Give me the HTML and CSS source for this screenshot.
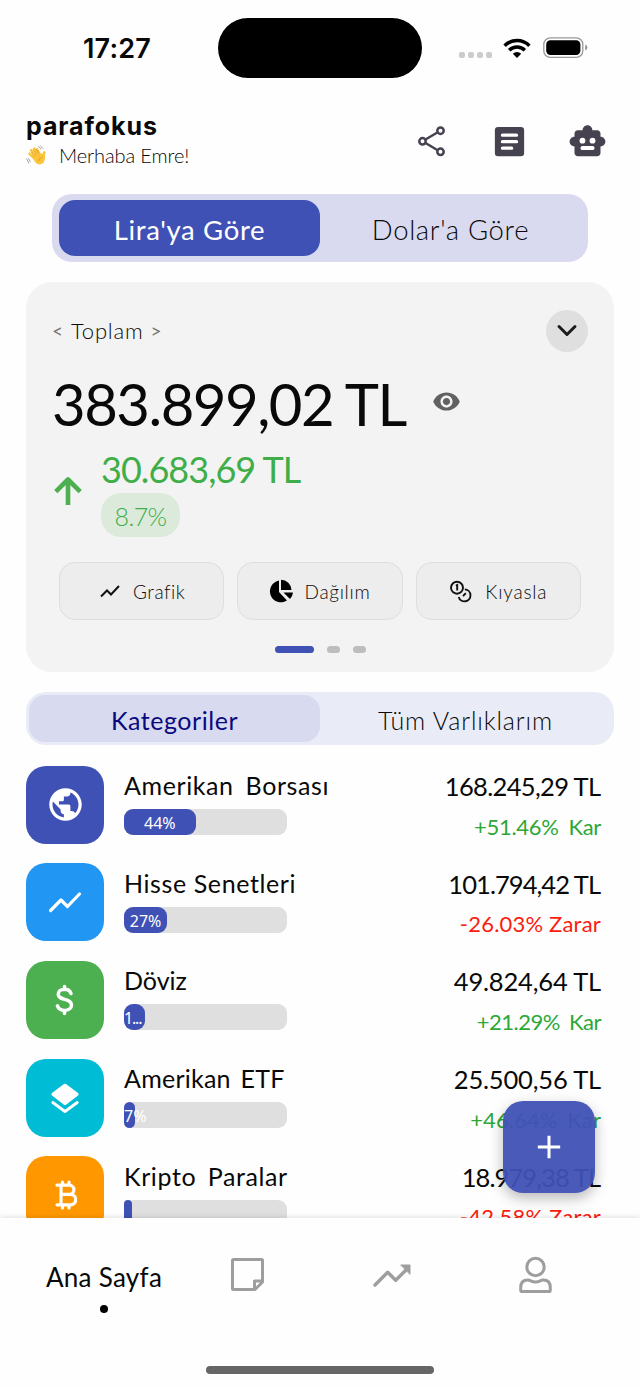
FILE: index.html
```html
<!DOCTYPE html>
<html lang="tr">
<head>
<meta charset="utf-8">
<title>parafokus</title>
<link rel="stylesheet" href="styles.css">
</head>
<body>
<div class="app">
  <div class="status">
    <span class="clock">17:27</span>
    <span class="island"></span>
    <span class="signal"><i></i><i></i><i></i><i></i></span>
    <svg class="wifi" width="28" height="21" viewBox="0 0 28 21" fill="none" stroke="#000" stroke-width="3.500"><path d="M1.600 7.700a17.600 17.600 0 0 1 24.800 0M6.200 12.200a11 11 0 0 1 15.600 0"/><path d="M9.800 15.800a6 6 0 0 1 8.400 0L14 20z" fill="#000" stroke="none"/></svg>
    <svg class="battery" width="45" height="22" viewBox="0 0 45 22"><rect x=".8" y=".8" width="39" height="19.600" rx="6.500" fill="none" stroke="#999" stroke-width="1.300"/><rect x="3.200" y="3.200" width="34.200" height="14.800" rx="4.200"/><path d="M42.300 7.500q2 1 2 3t-2 3z" fill="#888"/></svg>
  </div>

  <header class="header">
    <div class="brand">
      <h1>parafokus</h1>
      <p><svg width="21" height="21" viewBox="0 0 21 21" fill="none" stroke-linecap="round"><path d="M6 10.500 9 17q3 4 7.500 1.500 3-2 2.500-9L13 8z" fill="#fbc53a"/><path d="M9.500 14.500 3.600 8.600M10 11.500 5.200 5.200M12 10 8.200 3.600M14 10l-2.800-5.500M16.500 14.500l1.800-7" stroke="#fbc53a" stroke-width="2.700"/><path d="m8.500 11-3-3.700M10.300 9 7.300 5M12.500 8 10.300 4.500M12.500 16q.6-3.400 3.700-4" stroke="#dc8b24" stroke-width=".7"/><path d="M12.500 1.500l2.500 2.500M14.500.800l2.500 2.700M2.500 13.500l1.800 3.200M.8 14l1.900 4" stroke="#999" stroke-width=".9"/></svg><span>Merhaba Emre!</span></p>
    </div>
    <nav class="actions">
      <svg width="39" height="39" viewBox="0 0 39 39" fill="none" stroke="#47424f" stroke-width="2.500"><path d="M13.500 17.500 25.300 10.500M13.500 21 25.300 28"/><circle cx="10.500" cy="19.300" r="3.200"/><circle cx="28.500" cy="8.700" r="3.200"/><circle cx="28.500" cy="29.800" r="3.200"/></svg>
      <svg width="39" height="39" viewBox="0 0 24 24"><rect x="3" y="3" width="18" height="18" rx="2" fill="#47424f"/><path d="M7.700 8.100h8.600M7.700 12.100h8.600M7.700 16.100h5.600" stroke="#fff" stroke-width="2.100" stroke-linecap="round"/></svg>
      <svg width="39" height="39" viewBox="0 0 24 24" fill="#47424f"><path d="M20 9V7c0-1.100-.9-2-2-2h-3c0-1.660-1.340-3-3-3S9 3.340 9 5H6c-1.100 0-2 .9-2 2v2c-1.660 0-3 1.340-3 3s1.340 3 3 3v4c0 1.100.9 2 2 2h12c1.100 0 2-.9 2-2v-4c1.660 0 3-1.340 3-3s-1.340-3-3-3z"/><g fill="#fff"><circle cx="8.900" cy="11.500" r="1.800"/><circle cx="15.100" cy="11.500" r="1.800"/><rect x="7.700" y="14.800" width="8.600" height="2.500" rx="1.200"/></g></svg>
    </nav>
  </header>

  <div class="currency">
    <button class="on"><span>Lira'ya Göre</span></button>
    <button><span>Dolar'a Göre</span></button>
  </div>

  <section class="card">
    <div class="card-top">
      <div class="picker"><i>&lt;</i><span>Toplam</span><i>&gt;</i></div>
      <button class="expand"><svg width="22" height="16" viewBox="0 0 22 16" fill="none" stroke="#1b1b1b" stroke-width="3" stroke-linecap="round" stroke-linejoin="round"><path d="m3 3.500 8 8 8-8"/></svg></button>
    </div>
    <div class="total">
      <strong>383.899,02 TL</strong>
      <svg width="29" height="29" viewBox="0 0 24 24" fill="#616161"><path d="M12 4.500C7 4.500 2.730 7.610 1 12c1.730 4.390 6 7.500 11 7.500s9.270-3.110 11-7.500c-1.730-4.390-6-7.500-11-7.500zM12 17c-2.760 0-5-2.240-5-5s2.240-5 5-5 5 2.240 5 5-2.240 5-5 5zm0-8c-1.660 0-3 1.340-3 3s1.340 3 3 3 3-1.340 3-3-1.340-3-3-3z"/></svg>
    </div>
    <div class="gain">
      <svg width="30" height="30" viewBox="0 0 30 30" fill="none" stroke="#4caf50" stroke-width="4.600"><path d="M15 29V4M2.800 15.700 15 3.500l12.200 12.200" stroke-linejoin="round"/></svg>
      <div>
        <span class="gain-value">30.683,69 TL</span>
        <span class="pill">8.7%</span>
      </div>
    </div>
    <div class="tools">
      <button class="tool-chart"><svg width="20" height="14" viewBox="0 0 20 14" fill="none" stroke="#111" stroke-width="2"><path d="m1 12.500 6-6 4 4L19 2"/></svg><span>Grafik</span></button>
      <button class="tool-pie"><svg width="25" height="25" viewBox="0 0 25 25"><path d="M11 1.500V13l8 8.500A11 11 0 1 1 11 1.500zM13 0.800A10.500 10.500 0 0 1 23.500 11H13zM15.500 13.500H25q-.5 4-3 6.500z"/></svg><span>Dağılım</span></button>
      <button class="tool-compare"><svg width="23" height="23" viewBox="0 0 23 23" fill="none" stroke="#111" stroke-width="1.900"><circle cx="8" cy="7.700" r="6"/><path d="M6.900 5.600 8.200 5v5.600M15.800 9.400A6 6 0 1 1 9.700 17M14 16.200l2.800-3"/></svg><span>Kıyasla</span></button>
    </div>
    <div class="dots"><i class="on"></i><i></i><i></i></div>
  </section>

  <div class="tabs">
    <button class="on"><span>Kategoriler</span></button>
    <button class="wide"><span>Tüm Varlıklarım</span></button>
  </div>

  <main class="list">
    <article class="row">
      <div class="tile indigo"><svg width="39" height="39" viewBox="0 0 24 24" fill="#fff"><path d="M12 2C6.480 2 2 6.480 2 12s4.480 10 10 10 10-4.480 10-10S17.520 2 12 2zm-1 17.930c-3.950-.49-7-3.850-7-7.930 0-.62.080-1.210.210-1.790L9 15v1c0 1.100.9 2 2 2v1.930zm6.900-2.540c-.26-.81-1-1.390-1.900-1.390h-1v-3c0-.55-.45-1-1-1H8v-2h2c.55 0 1-.45 1-1V7h2c1.100 0 2-.9 2-2v-.41c2.930 1.190 5 4.060 5 7.410 0 2.080-.8 3.970-2.100 5.390z"/></svg></div>
      <div class="info"><h2 class="n1">Amerikan Borsası</h2><div class="bar"><b style="width:44%">44%</b></div></div>
      <div class="sum"><span class="a1">168.245,29 TL</span><em class="up p1">+51.46% Kar</em></div>
    </article>
    <article class="row">
      <div class="tile blue"><svg width="34" height="24" viewBox="0 0 34 24" fill="none" stroke="#fff" stroke-width="3.200" stroke-linecap="round" stroke-linejoin="round"><path d="M2.600 20.500 13 10l6.500 6.500L31.500 4"/></svg></div>
      <div class="info"><h2 class="n2">Hisse Senetleri</h2><div class="bar"><b style="width:26.5%">27%</b></div></div>
      <div class="sum"><span class="a2">101.794,42 TL</span><em class="down p2">-26.03% Zarar</em></div>
    </article>
    <article class="row">
      <div class="tile green"><svg width="20" height="32" viewBox="0 0 20 32" fill="none" stroke="#fff" stroke-width="3.500" stroke-linecap="round"><path d="M9.500 2.500v3M9.500 26.500v3M16 9.500c-1-3-3.500-4.200-6.500-4.200-3.700 0-6.300 2-6.300 5 0 6.500 13.300 3.500 13.300 10.700 0 3.300-3 5.400-6.900 5.400-3.600 0-6.300-1.700-7.200-4.600"/></svg></div>
      <div class="info"><h2 class="n3">Döviz</h2><div class="bar"><b class="cut tight" style="width:13%">1...</b></div></div>
      <div class="sum"><span class="a3">49.824,64 TL</span><em class="up p3">+21.29% Kar</em></div>
    </article>
    <article class="row">
      <div class="tile cyan"><svg width="30" height="32" viewBox="0 0 30 32" fill="#fff"><path d="M13.600 2.200q1.400-1 2.800 0L28 11q1.500 1.200 0 2.500l-11.600 9q-1.400 1-2.800 0L2 13.500q-1.500-1.300 0-2.500z"/><path d="m2.800 20.500 12.200 9 12.200-9" fill="none" stroke="#00bcd4" stroke-width="7"/><path d="m2.800 20.500 12.200 9 12.200-9" fill="none" stroke="#fff" stroke-width="2.900" stroke-linecap="round" stroke-linejoin="round"/></svg></div>
      <div class="info"><h2 class="n4">Amerikan ETF</h2><div class="bar"><b class="cut" style="width:6.6%">7%</b></div></div>
      <div class="sum"><span class="a4">25.500,56 TL</span><em class="up p4">+46.64% Kar</em></div>
    </article>
    <article class="row">
      <div class="tile orange"><svg width="24" height="32" viewBox="-1 0 24 32" fill="none" stroke="#fff" stroke-width="3.200" stroke-linecap="round" stroke-linejoin="round"><path d="M3 6.200h12.300a4.600 4.600 0 0 1 0 9.200H7h9.500a5.200 5.200 0 0 1 0 10.400H3M7 6.200v19.600M8.500 3v3M15 3v3M8.500 26v3M15 26v3"/></svg></div>
      <div class="info"><h2 class="n5">Kripto Paralar</h2><div class="bar"><b class="cut" style="width:5%"></b></div></div>
      <div class="sum"><span class="a5">18.979,38 TL</span><em class="down p2">-42.58% Zarar</em></div>
    </article>
  </main>

  <button class="fab"><svg width="24" height="24" viewBox="0 0 24 24" stroke="#fff" stroke-width="3"><path d="M12 .8v22.400M.8 12h22.400"/></svg></button>

  <footer class="nav">
    <div class="nav-items">
      <div class="nav-home"><span>Ana Sayfa</span><i></i></div>
      <div><svg width="36" height="36" viewBox="0 0 36 36" fill="none" stroke="#9e9e9e" stroke-width="3" stroke-linejoin="round"><path d="M3.500 2.500h28a1 1 0 0 1 1 1V25l-7.500 7.500H3.500a1 1 0 0 1-1-1v-28a1 1 0 0 1 1-1zM24.500 32v-8h8"/></svg></div>
      <div><svg width="40" height="28" viewBox="0 0 40 28" fill="none" stroke="#9e9e9e" stroke-width="3.400" stroke-linecap="round" stroke-linejoin="round"><path d="M3 24 15.700 11.300l8 8L34 9"/><path d="M29 4h9v9z" fill="#9e9e9e" stroke-width="1"/></svg></div>
      <div><svg width="36" height="40" viewBox="0 0 36 40" fill="none" stroke="#9e9e9e" stroke-width="3"><circle cx="17.500" cy="12" r="8.700"/><path d="M4 36.500h27q1.300 0 1.300-1.300v-2.700q0-7.500-7-7.500-1.800 0-3 .8-4.800 2.300-9.600 0-1.200-.8-3-.8-7 0-7 7.500v2.700q0 1.300 1.300 1.300z"/></svg></div>
    </div>
    <div class="home-bar"></div>
  </footer>
</div>
</body>
</html>
```
FILE: styles.css
```css
* { box-sizing: border-box; margin: 0; padding: 0; }
body { background: #fefefe; color: #090909; font-family: Lato, "Open Sans", sans-serif; }
button { border: 0; background: none; font: inherit; color: inherit; display: flex; align-items: center; justify-content: center; }
svg { display: block; flex: none; }
span, strong, em, h1, h2 { white-space: nowrap; }
.app { width: 640px; height: 1387px; display: flex; flex-direction: column; overflow: hidden; position: relative; }

.status { height: 96px; flex: none; display: flex; align-items: center; padding-left: 83px; }
.clock { width: 135px; font: 600 27px/32px Inter, sans-serif; letter-spacing: .2px; padding-top: 1px; }
.island { width: 204px; height: 60px; border-radius: 30px; background: #000; }
.signal { display: flex; gap: 3px; margin: 14px 11px 0 37px; }
.signal i { width: 6px; height: 6px; border-radius: 2px; background: #ccc; }
.battery { margin-left: 12px; }

.header { height: 98px; flex: none; display: flex; justify-content: space-between; padding: 13px 33px 0 26px; }
.brand h1 { font: 700 25px/32px Inter, sans-serif; letter-spacing: .9px; padding-top: 1px; height: 32px; }
.brand p { display: flex; align-items: center; gap: 12px; height: 28px; font-size: 20px; font-weight: 300; }
.brand p span { letter-spacing: -.1px; }
.actions { display: flex; gap: 39px; padding-top: 13px; }

.currency { flex: none; margin: 0 52px; height: 68px; padding: 6px 7px; border-radius: 20px; background: #d9daf0; display: flex; }
.currency button { flex: 1; height: 56px; border-radius: 16px; font-size: 27.500px; font-weight: 300; padding-top: 2px; letter-spacing: .65px; }
.currency .on { background: #3f51b5; color: #fff; font-weight: 400; }

.card { flex: none; margin: 20px 26px 0; height: 390px; border-radius: 26px; background: #f3f3f3; padding: 27px 26px 0; }
.card-top { display: flex; justify-content: space-between; align-items: center; height: 43px; }
.picker { display: flex; align-items: center; gap: 8px; font-size: 22px; font-weight: 300; }
.picker span { letter-spacing: .8px; margin-right: -1px; }
.picker i { font-style: normal; font-size: 19px; font-weight: 400; color: #777; }
.expand { width: 42px; height: 42px; border-radius: 50%; background: #dfdfdf; }
.total { display: flex; align-items: center; gap: 26px; height: 72px; margin-top: 15px; }
.total strong { font-size: 58px; line-height: 72px; font-weight: 400; letter-spacing: -1.480px; padding-top: 2px; }
.total svg { margin-top: -3px; }
.gain { display: flex; align-items: center; gap: 18px; margin-top: 7px; height: 92px; color: #3fae49; }
.gain svg { margin: -2px 0 0 1px; }
.gain-value { display: block; font-size: 36px; line-height: 44px; height: 46px; letter-spacing: -.95px; }
.pill { display: flex; align-items: center; justify-content: center; width: 79px; height: 44px; border-radius: 20px; background: #dbeadb; font-size: 25px; font-weight: 300; letter-spacing: -.6px; padding-top: 2px; }
.tools { display: grid; grid-template-columns: repeat(3, minmax(0, 1fr)); gap: 13px; margin: 24px 7px 0; }
.tools button { height: 58px; border: 1.500px solid #dedede; border-radius: 16px; background: #ededed; font-size: 19px; font-weight: 300; gap: 13px; letter-spacing: .5px; }
.tools .tool-chart { padding-left: 2px; }
.tools .tool-pie { padding-right: 2px; gap: 12px; letter-spacing: .7px; }
.tools .tool-compare { letter-spacing: .8px; }
.dots { display: flex; justify-content: center; gap: 13px; margin-top: 26px; }
.dots i { width: 13px; height: 7px; border-radius: 4px; background: #bdbdbd; }
.dots .on { width: 39px; background: #3f51b5; }

.tabs { flex: none; margin: 20px 26px 0; height: 53px; padding: 3px; border-radius: 20px; background: #e9ebf6; display: flex; }
.tabs button { flex: 1; border-radius: 16px; font-size: 25px; font-weight: 300; padding-top: 3px; }
.tabs .on { background: #d8daef; color: #0a0a80; font-weight: 400; letter-spacing: .55px; }
.tabs .wide { letter-spacing: .85px; }

.list { flex: none; height: 473px; overflow: hidden; padding: 20.500px 39px 0 26px; display: flex; flex-direction: column; gap: 19.700px; }
.row { display: flex; flex: none; height: 78px; }
.tile { width: 78px; height: 78px; border-radius: 20px; display: flex; align-items: center; justify-content: center; }
.indigo { background: #3f51b5; }
.blue { background: #2196f3; }
.green { background: #4caf50; }
.cyan { background: #00bcd4; }
.orange { background: #ff9800; }
.info { margin-left: 20px; padding-top: 4.500px; }
.info h2 { font-size: 25px; line-height: 31px; font-weight: 400; height: 39px; }
.n1 { letter-spacing: .6px; word-spacing: 5px; }
.n2 { letter-spacing: .6px; }
.n4 { letter-spacing: .25px; word-spacing: 3px; }
.n5 { letter-spacing: .6px; word-spacing: 4.500px; }
.bar { width: 163px; height: 26px; border-radius: 9px; background: #dfdfdf; display: flex; }
.bar b { height: 26px; border-radius: 9px; background: #3f51b5; color: #fff; font: 400 16px/28px "Noto Sans", sans-serif; text-align: center; white-space: nowrap; }
.bar .cut { text-align: left; }
.bar .tight { letter-spacing: -1.200px; }
.sum { margin-left: auto; text-align: right; padding-top: 4.500px; display: flex; flex-direction: column; align-items: flex-end; }
.sum span { font-size: 25.500px; line-height: 32px; height: 41.500px; }
.sum em { font-style: normal; font-size: 22px; line-height: 30px; }
.sum .a1 { letter-spacing: -.65px; margin-right: .65px; }
.sum .a2 { letter-spacing: -.95px; margin-right: .95px; }
.sum .a3, .sum .a4 { letter-spacing: -.17px; }
.sum .a5 { letter-spacing: -.9px; margin-right: .9px; }
.sum .p1 { letter-spacing: -.3px; word-spacing: 4.500px; }
.sum .p2 { letter-spacing: .2px; }
.sum .p3 { letter-spacing: -.5px; word-spacing: 4px; }
.sum .p4 { letter-spacing: .1px; word-spacing: 4px; }
.up { color: #2da836; }
.down { color: #fb1c10; }

.fab { position: absolute; right: 45px; top: 1101px; width: 92px; height: 92px; border-radius: 20px; background: rgba(63, 81, 181, .95); box-shadow: 0 5px 14px rgba(0, 0, 0, .28); }

.nav { flex: none; height: 169px; background: #fefefe; box-shadow: 0 -1px 5px rgba(0, 0, 0, .12); position: relative; }
.nav-items { display: grid; grid-template-columns: 144px 144px 144px 144px; padding: 0 32px; height: 114px; align-items: center; justify-items: center; }
.nav-home { display: flex; flex-direction: column; align-items: center; padding-top: 24px; }
.nav-home span { font-size: 26px; line-height: 32px; letter-spacing: .3px; }
.nav-home i { width: 8px; height: 8px; border-radius: 50%; background: #000; margin-top: 12px; }
.home-bar { width: 228px; height: 8px; border-radius: 4px; background: #666; margin: 34px auto 0; }
```
